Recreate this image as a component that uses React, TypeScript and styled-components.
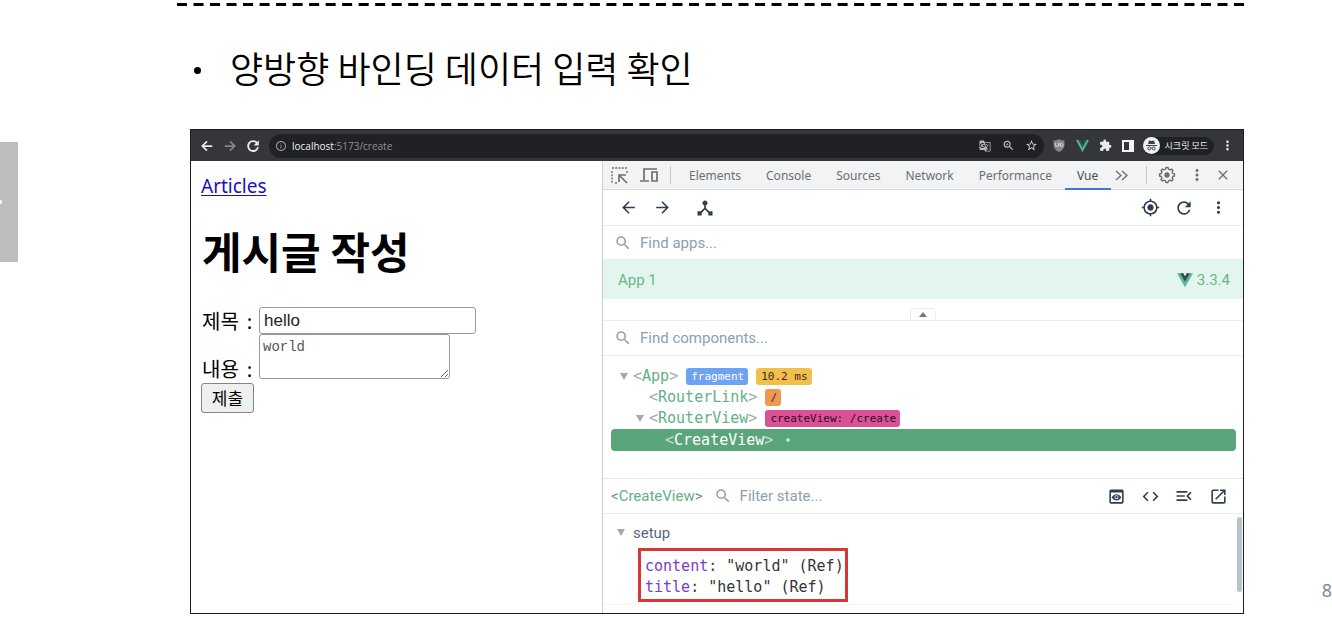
import React from 'react';
import styled, { createGlobalStyle } from 'styled-components';
import {
  MdArrowBack,
  MdArrowForward,
  MdClose,
  MdCode,
  MdDeviceHub,
  MdExtension,
  MdGTranslate,
  MdMenuOpen,
  MdMoreVert,
  MdMyLocation,
  MdOpenInNew,
  MdOutlineInfo,
  MdPreview,
  MdRefresh,
  MdSearch,
  MdStarBorder,
  MdZoomIn,
} from 'react-icons/md';

const korean = `'Noto Sans', 'Noto Sans CJK KR', sans-serif`;
const roboto = `Roboto, 'Noto Sans CJK KR', sans-serif`;
const mono = `'DejaVu Sans Mono', monospace`;

const GlobalStyle = createGlobalStyle`
  * { box-sizing: border-box; }
  body { margin: 0; background: #fff; color: #000; font-family: ${korean}; }
  button, input, textarea { margin: 0; }
  svg { display: block; flex: none; }
`;

/* Slide */

const Slide = styled.div`
  display: grid;
  grid-template-columns: 177px minmax(0, 1fr) 88px;
  min-height: 100vh;
`;

const RailButton = styled.button`
  display: flex;
  align-items: center;
  width: 18px;
  height: 120px;
  margin-top: 142px;
  padding: 0;
  border: 0;
  background: #bdbdbd;

  &::before {
    content: '';
    width: 2px;
    height: 4px;
    border-radius: 0 2px 2px 0;
    background: #fff;
  }
`;

const Main = styled.main`
  padding: 3px 0 9px;
`;

const Rule = styled.svg`
  width: 100%;
  height: 3px;
`;

const Points = styled.ul`
  height: 123px;
  margin: 0;
  padding: 35px 0 0 17px;
  list-style: none;
`;

const Point = styled.li`
  display: flex;
  align-items: center;
  gap: 29px;
  font: 350 36px/52px 'Noto Sans CJK KR', sans-serif;
  color: #000;

  &::before {
    content: '';
    width: 7px;
    height: 7px;
    margin-top: 6px;
    border-radius: 50%;
    background: #000;
  }
`;

const PageNumber = styled.footer`
  align-self: end;
  padding-bottom: 22px;
  font-size: 18px;
  line-height: 24px;
  text-align: right;
  color: #888;
`;

/* Browser */

const Browser = styled.section`
  margin-left: 13px;
  border: 1px solid #1d1e20;
`;

const AddressBar = styled.div`
  display: flex;
  align-items: center;
  height: 31px;
  padding: 0 4px;
  background: #35363a;
  color: #e8eaed;
`;

const BarButton = styled.button<{ $dim?: boolean }>`
  display: grid;
  place-items: center;
  width: 23px;
  height: 24px;
  padding: 0;
  border: 0;
  background: none;
  color: ${(p) => (p.$dim ? '#85878b' : '#e8eaed')};
`;

const UrlField = styled.div`
  display: flex;
  flex: 1;
  align-items: center;
  height: 24px;
  margin: 0 4px 0 5px;
  padding: 0 1px 0 6px;
  border-radius: 12px;
  background: #202124;
`;

const Url = styled.span`
  flex: 1;
  margin-left: 5px;
  font: 10px/16px 'Open Sans', sans-serif;
  color: #919498;

  b {
    font-weight: 400;
    color: #f1f3f4;
  }
`;

const Incognito = styled.div`
  display: flex;
  align-items: center;
  gap: 5px;
  height: 18px;
  margin: 0 2px 0 3px;
  padding-right: 6px;
  border-radius: 9px;
  background: #202124;
  font: 9px/16px 'Noto Sans CJK KR', sans-serif;
`;

const Panes = styled.div`
  display: grid;
  grid-template-columns: minmax(0, 411fr) minmax(0, 641fr);
`;

/* Web page in the left pane */

const WebPage = styled.article`
  padding: 10px;
  font-size: 19px;
`;

const PageLink = styled.a`
  display: block;
  width: max-content;
  line-height: 30px;
  color: #1a0dcc;
  text-underline-offset: 2px;
  text-decoration-thickness: 1px;
`;

const Title = styled.h1`
  margin: 18px 0 26px 1px;
  font: 700 43px/62px 'Noto Sans CJK KR', sans-serif;
  word-break: keep-all;
`;

const FormRow = styled.div<{ $align: 'center' | 'flex-end' }>`
  display: flex;
  align-items: ${(p) => p.$align};
`;

const FieldLabel = styled.label`
  display: flex;
  gap: 8px;
  width: 58px;
  padding-left: 1px;
  font: 20px/20px 'Noto Sans CJK KR', sans-serif;
`;

const TitleInput = styled.input`
  width: 217px;
  height: 27px;
  padding: 1px 4px;
  border: 1px solid #999;
  border-radius: 3px;
  font: 17px/20px 'Liberation Sans', sans-serif;
  color: #222;
`;

const ContentInput = styled.textarea`
  width: 191px;
  height: 45px;
  padding: 3px;
  border: 1px solid #999;
  border-radius: 3px;
  font: 14px/18px 'Liberation Mono', monospace;
  color: #555;
`;

const Submit = styled.button`
  display: block;
  width: 53px;
  height: 30px;
  margin-top: 4px;
  padding: 0;
  border: 1px solid #858585;
  border-radius: 3px;
  background: #efefef;
  font: 17px/24px 'Noto Sans CJK KR', sans-serif;
`;

/* Developer tools in the right pane */

const DevTools = styled.section`
  display: flex;
  flex-direction: column;
  border-left: 1px solid #cacdd1;
  font-family: ${roboto};
  font-size: 15px;
  color: #2c3e50;
`;

const TabBar = styled.div`
  display: flex;
  align-items: stretch;
  height: 29px;
  padding: 0 4px 0 8px;
  border-bottom: 1px solid #d3dae3;
  background: #f1f3f4;
  color: #6b6e72;
`;

const TabTool = styled.button<{ $width: number }>`
  display: grid;
  place-items: center;
  width: ${(p) => p.$width}px;
  padding: 0;
  border: 0;
  background: none;
  color: inherit;
`;

const Divider = styled.span`
  width: 1px;
  height: 18px;
  align-self: center;
  background: #c6c9cd;
`;

const Tabs = styled.nav`
  display: flex;
  flex: 1;
  margin-left: 6px;
`;

const Tab = styled.button<{ $active?: boolean }>`
  height: 29px;
  padding: 2px 13px 0 12px;
  border: 0;
  border-bottom: 2px solid ${(p) => (p.$active ? '#3b78e0' : 'transparent')};
  background: none;
  font: 12px/25px ${korean};
  color: ${(p) => (p.$active ? '#4b4e52' : '#6b6e72')};
`;

const ToolRow = styled.div`
  display: flex;
  align-items: center;
  height: 36px;
  padding: 0 8px;
  border-bottom: 1px solid #ebeef0;
`;

const IconButton = styled.button<{ $apart?: boolean }>`
  display: grid;
  place-items: center;
  width: 34px;
  height: 34px;
  margin-left: ${(p) => (p.$apart ? '9px' : '0')};
  padding: 0;
  border: 0;
  background: none;
  color: #2c3e50;
`;

const Spacer = styled.span`
  flex: 1;
`;

const SearchRow = styled.label<{ $tall?: boolean }>`
  display: flex;
  align-items: center;
  gap: 8px;
  height: ${(p) => (p.$tall ? 35 : 34)}px;
  padding-left: 11px;
  border-bottom: 1px solid #ebeef0;
  color: #8ba1ae;
`;

const SearchInput = styled.input`
  flex: 1;
  min-width: 0;
  padding: 0;
  border: 0;
  outline: 0;
  background: none;
  font: 15px/20px ${roboto};

  &::placeholder {
    color: #8ba1ae;
    opacity: 1;
  }
`;

const AppRow = styled.div`
  display: flex;
  align-items: center;
  height: 39px;
  padding: 0 13px 0 15px;
  background: #e3f6ed;
  color: #6ab58a;
`;

const Version = styled.span`
  display: flex;
  align-items: center;
  gap: 4px;
`;

const Splitter = styled.div`
  display: flex;
  align-items: flex-end;
  justify-content: center;
  height: 22px;
  border-bottom: 1px solid #ebeef0;
`;

const CollapseButton = styled.button`
  display: grid;
  place-items: center;
  width: 26px;
  height: 12px;
  padding: 0;
  border: 1px solid #ebeef0;
  border-bottom: 0;
  border-radius: 5px 5px 0 0;
  background: #fff;
  color: #777;
`;

const Tree = styled.div`
  height: 123px;
  padding: 10px 7px 0 8px;
  border-bottom: 1px solid #e3e7ea;
`;

const TreeRow = styled.div<{ $depth: number; $selected?: boolean }>`
  display: flex;
  align-items: center;
  height: ${(p) => (p.$selected ? 22 : 21)}px;
  padding-left: ${(p) => 6 + p.$depth * 16}px;
  border-radius: 4px;
  background: ${(p) => (p.$selected ? '#5ba57a' : 'none')};
  font: 15px/21px ${mono};
  color: ${(p) => (p.$selected ? '#fff' : '#5fb185')};

  i {
    font-style: normal;
    color: ${(p) => (p.$selected ? '#bfe0cd' : '#a4aab0')};
  }
`;

const Caret = styled.span`
  display: grid;
  place-items: center start;
  width: 16px;
  padding-left: 3px;
  color: #a8a8a8;
`;

const Badge = styled.span<{ $bg: string; $fg?: string }>`
  margin-left: 8px;
  padding: 0 4px 0 5px;
  border-radius: 3px;
  background: ${(p) => p.$bg};
  font-size: 11px;
  line-height: 17px;
  color: ${(p) => p.$fg || '#3b2a1c'};
`;

const Dot = styled.span`
  width: 4px;
  height: 4px;
  margin-left: 13px;
  border-radius: 50%;
  background: #bfe0cd;
`;

const StateBar = styled.div`
  display: flex;
  align-items: center;
  height: 35px;
  padding: 0 8px;
  border-bottom: 1px solid #ebeef0;
  color: #5fb185;

  i {
    font-style: normal;
    color: #7c858d;
  }
`;

const StateSearch = styled.label`
  display: flex;
  flex: 1;
  align-items: center;
  gap: 8px;
  min-width: 0;
  margin-left: 11px;
  color: #8ba1ae;
`;

const StateBody = styled.div`
  display: flex;
  height: 99px;
  padding: 3px 1px 0 0;
`;

const StateContent = styled.div`
  flex: 1;
  height: 88px;
  border-bottom: 1px solid #f4f5f6;
`;

const ScrollThumb = styled.span`
  width: 5px;
  height: 75px;
  margin-left: 4px;
  border-radius: 3px;
  background: #b5c3cb;
`;

const Group = styled.div`
  display: flex;
  align-items: center;
  gap: 3px;
  height: 31px;
  padding-left: 11px;
  color: #546a7f;
`;

const Highlight = styled.dl`
  width: max-content;
  margin: 0 0 0 35px;
  padding: 5px 1px 1px 4px;
  border: 3px solid #d93636;
  font: 15px/21px ${mono};
  color: #333;

  div { display: flex; white-space: pre; }
  dt { color: #7a3bd0; }
  dt span { color: #444; }
  dd { margin: 0; }
`;

/* Drawings */

const VueLogo = ({ size }: { size: number }) => (
  <svg width={size} height={size} viewBox="0 0 24 24" aria-hidden="true">
    <path d="M0 2h9.300L12 6.600 14.700 2H24L12 22.800z" fill="#5db98b" />
    <path d="M4.800 2h4.500L12 6.600 14.700 2h4.500L12 14.500z" fill="#35495e" />
  </svg>
);

const VueOutline = () => (
  <svg width="13" height="13" viewBox="0 0 24 24" fill="none" aria-hidden="true">
    <path d="M2 2l10 18L22 2" stroke="#4fba87" strokeWidth="4" />
    <path d="M6 2l6 11 6-11" stroke="#35566a" strokeWidth="3" />
  </svg>
);

const BoldArrow = ({ right }: { right?: boolean }) => (
  <svg width="14" height="14" viewBox="0 0 24 24" fill="none" stroke="currentColor" strokeWidth="3" aria-hidden="true">
    <path d={right ? 'M3 12h17M12 4l8 8-8 8' : 'M21 12H4M12 4l-8 8 8 8'} />
  </svg>
);

const BoldReload = () => (
  <svg width="14" height="14" viewBox="0 0 24 24" aria-hidden="true">
    <path d="M19 7a8.500 8.500 0 1 0 1.500 7" fill="none" stroke="currentColor" strokeWidth="3.200" />
    <path d="M22 2v9h-9z" fill="currentColor" />
  </svg>
);

const Shield = () => (
  <svg width="12" height="13" viewBox="0 0 24 26" aria-hidden="true">
    <path d="M12 0c3 2 7 3 11 3v8c0 7-4 12-11 15C5 23 1 18 1 11V3c4 0 8-1 11-3z" fill="#85878b" />
    <path d="M5 8v4q0 3 3 3t3-3V8M14 15V8M14 12q0-3 3-3t3 3-3 3-3-3" stroke="#d2d3d4" strokeWidth="2" fill="none" />
  </svg>
);

const SidePanel = () => (
  <svg width="12" height="12" viewBox="0 0 12 12" aria-hidden="true">
    <path d="M1 1h10v10H1z" fill="none" stroke="#f1f3f4" strokeWidth="2" />
    <path d="M7 1h4v10H7z" fill="#f1f3f4" />
  </svg>
);

const Spy = () => (
  <svg width="17" height="17" viewBox="0 0 34 34" aria-hidden="true">
    <circle cx="17" cy="17" r="17" fill="#f1f3f4" />
    <path d="M12 7l5 1 5-1 2 7H10z" fill="#3c4043" />
    <path d="M6 17h22" stroke="#3c4043" strokeWidth="2" />
    <g fill="none" stroke="#3c4043" strokeWidth="2">
      <circle cx="12.500" cy="23" r="3" />
      <circle cx="21.500" cy="23" r="3" />
      <path d="M16 22h2" />
    </g>
  </svg>
);

const InspectIcon = () => (
  <svg width="17" height="17" viewBox="0 0 17 17" fill="none" stroke="currentColor" aria-hidden="true">
    <path d="M1 1h15M1 4v12M16 4v2M4 16h2" strokeDasharray="2 1.250" strokeWidth="1.400" />
    <path d="M8 15V8h7M8 8l8 8" strokeWidth="1.700" />
  </svg>
);

const DeviceIcon = () => (
  <svg width="18" height="16" viewBox="0 0 18 16" fill="none" stroke="currentColor" strokeWidth="1.700" aria-hidden="true">
    <path d="M17 2H4v11M0 14h9" />
    <path d="M12 5h5v9h-5z" />
  </svg>
);

const gearPath = (() => {
  const points: string[] = [];
  for (let tooth = 0; tooth < 8; tooth++) {
    [[-14, 8], [-8, 10], [8, 10], [14, 8]].forEach(([offset, radius]) => {
      const angle = ((tooth * 45 + offset) * Math.PI) / 180;
      points.push(`${(12 + radius * Math.sin(angle)).toFixed(2)} ${(12 - radius * Math.cos(angle)).toFixed(2)}`);
    });
  }
  return `M${points.join('L')}Z`;
})();

const GearIcon = () => (
  <svg width="18" height="18" viewBox="0 0 24 24" aria-hidden="true">
    <path d={gearPath} fill="none" stroke="currentColor" strokeWidth="1.900" strokeLinejoin="round" />
    <circle cx="12" cy="12" r="3.600" fill="currentColor" />
  </svg>
);

const ChevronsIcon = () => (
  <svg width="13" height="11" viewBox="0 0 13 11" fill="none" stroke="currentColor" strokeWidth="1.300" aria-hidden="true">
    <path d="M1 1l5 4.500-5 4.500M7 1l5 4.500-5 4.500" />
  </svg>
);

const Triangle = ({ up }: { up?: boolean }) => (
  <svg width="8" height="7" viewBox="0 0 8 7" aria-hidden="true">
    <path d={up ? 'M0 6l4-5 4 5z' : 'M0 0h8L4 7z'} fill="currentColor" />
  </svg>
);

const ComponentName = ({ name }: { name: string }) => (
  <span>
    <i>&lt;</i>
    {name}
    <i>&gt;</i>
  </span>
);

const tabs = ['Elements', 'Console', 'Sources', 'Network', 'Performance', 'Vue'];

const state = [
  { name: 'content', value: '"world" (Ref)' },
  { name: 'title', value: '"hello" (Ref)' },
];

export default function App() {
  return (
    <Slide>
      <GlobalStyle />
      <RailButton aria-label="Open side panel" />
      <Main>
        <Rule aria-hidden="true">
          <line x1="0" y1="1.5" x2="100%" y2="1.5" stroke="#000" strokeWidth="3" pathLength={2132} strokeDasharray="20 13" />
        </Rule>
        <Points>
          <Point>양방향 바인딩 데이터 입력 확인</Point>
        </Points>

        <Browser>
          <AddressBar>
            <BarButton aria-label="Back"><BoldArrow /></BarButton>
            <BarButton aria-label="Forward" $dim><BoldArrow right /></BarButton>
            <BarButton aria-label="Reload"><BoldReload /></BarButton>
            <UrlField>
              <MdOutlineInfo size={12} color="#9aa0a6" />
              <Url><b>localhost</b>:5173/create</Url>
              <BarButton aria-label="Translate"><MdGTranslate size={12} color="#b5b8bc" /></BarButton>
              <BarButton aria-label="Zoom"><MdZoomIn size={13} color="#c5c8cc" /></BarButton>
              <BarButton aria-label="Bookmark"><MdStarBorder size={13} color="#d0d3d6" /></BarButton>
            </UrlField>
            <BarButton aria-label="Content blocker"><Shield /></BarButton>
            <BarButton aria-label="Vue devtools"><VueOutline /></BarButton>
            <BarButton aria-label="Extensions"><MdExtension size={13} /></BarButton>
            <BarButton aria-label="Side panel"><SidePanel /></BarButton>
            <Incognito><Spy />시크릿 모드</Incognito>
            <BarButton aria-label="Menu"><MdMoreVert size={15} /></BarButton>
          </AddressBar>

          <Panes>
            <WebPage>
              <PageLink href="#articles">Articles</PageLink>
              <Title>게시글 작성</Title>
              <form onSubmit={(e) => e.preventDefault()}>
                <FormRow $align="center">
                  <FieldLabel htmlFor="title">제목 <span>:</span></FieldLabel>
                  <TitleInput id="title" defaultValue="hello" />
                </FormRow>
                <FormRow $align="flex-end">
                  <FieldLabel htmlFor="content">내용 <span>:</span></FieldLabel>
                  <ContentInput id="content" defaultValue="world" />
                </FormRow>
                <Submit>제출</Submit>
              </form>
            </WebPage>

            <DevTools>
              <TabBar>
                <TabTool $width={17} aria-label="Inspect"><InspectIcon /></TabTool>
                <TabTool $width={42} aria-label="Toggle device"><DeviceIcon /></TabTool>
                <Divider />
                <Tabs>
                  {tabs.map((tab) => (
                    <Tab key={tab} $active={tab === 'Vue'}>{tab}</Tab>
                  ))}
                  <TabTool $width={20} aria-label="More tabs"><ChevronsIcon /></TabTool>
                </Tabs>
                <Divider />
                <TabTool $width={40} aria-label="Settings"><GearIcon /></TabTool>
                <TabTool $width={20} aria-label="More options"><MdMoreVert size={18} /></TabTool>
                <TabTool $width={32} aria-label="Close"><MdClose size={16} /></TabTool>
              </TabBar>

              <ToolRow>
                <IconButton aria-label="Previous"><MdArrowBack size={19} /></IconButton>
                <IconButton aria-label="Next"><MdArrowForward size={19} /></IconButton>
                <IconButton aria-label="Inspector" $apart><MdDeviceHub size={20} /></IconButton>
                <Spacer />
                <IconButton aria-label="Select component"><MdMyLocation size={19} /></IconButton>
                <IconButton aria-label="Refresh"><MdRefresh size={20} /></IconButton>
                <IconButton aria-label="More"><MdMoreVert size={19} /></IconButton>
              </ToolRow>

              <SearchRow>
                <MdSearch size={18} />
                <SearchInput aria-label="Find apps" placeholder="Find apps..." />
              </SearchRow>
              <AppRow>
                App 1
                <Spacer />
                <Version><VueLogo size={16} />3.3.4</Version>
              </AppRow>
              <Splitter>
                <CollapseButton aria-label="Collapse"><Triangle up /></CollapseButton>
              </Splitter>
              <SearchRow $tall>
                <MdSearch size={18} />
                <SearchInput aria-label="Find components" placeholder="Find components..." />
              </SearchRow>

              <Tree>
                <TreeRow $depth={0}>
                  <Caret><Triangle /></Caret>
                  <ComponentName name="App" />
                  <Badge $bg="#6ea2f3" $fg="#fff">fragment</Badge>
                  <Badge $bg="#f1c04c">10.2 ms</Badge>
                </TreeRow>
                <TreeRow $depth={1}>
                  <Caret />
                  <ComponentName name="RouterLink" />
                  <Badge $bg="#ee9851">/</Badge>
                </TreeRow>
                <TreeRow $depth={1}>
                  <Caret><Triangle /></Caret>
                  <ComponentName name="RouterView" />
                  <Badge $bg="#d95295" $fg="#340a20">createView: /create</Badge>
                </TreeRow>
                <TreeRow $depth={2} $selected>
                  <Caret />
                  <ComponentName name="CreateView" />
                  <Dot />
                </TreeRow>
              </Tree>

              <StateBar>
                <ComponentName name="CreateView" />
                <StateSearch>
                  <MdSearch size={18} />
                  <SearchInput aria-label="Filter state" placeholder="Filter state..." />
                </StateSearch>
                <IconButton aria-label="Scroll to component"><MdPreview size={19} /></IconButton>
                <IconButton aria-label="Show render code"><MdCode size={19} /></IconButton>
                <IconButton aria-label="Inspect DOM"><MdMenuOpen size={20} /></IconButton>
                <IconButton aria-label="Open in editor"><MdOpenInNew size={19} /></IconButton>
              </StateBar>
              <StateBody>
                <StateContent>
                  <Group><Caret><Triangle /></Caret>setup</Group>
                  <Highlight>
                    {state.map(({ name, value }) => (
                      <div key={name}>
                        <dt>{name}<span>: </span></dt>
                        <dd>{value}</dd>
                      </div>
                    ))}
                  </Highlight>
                </StateContent>
                <ScrollThumb />
              </StateBody>
            </DevTools>
          </Panes>
        </Browser>
      </Main>
      <PageNumber>8</PageNumber>
    </Slide>
  );
}
